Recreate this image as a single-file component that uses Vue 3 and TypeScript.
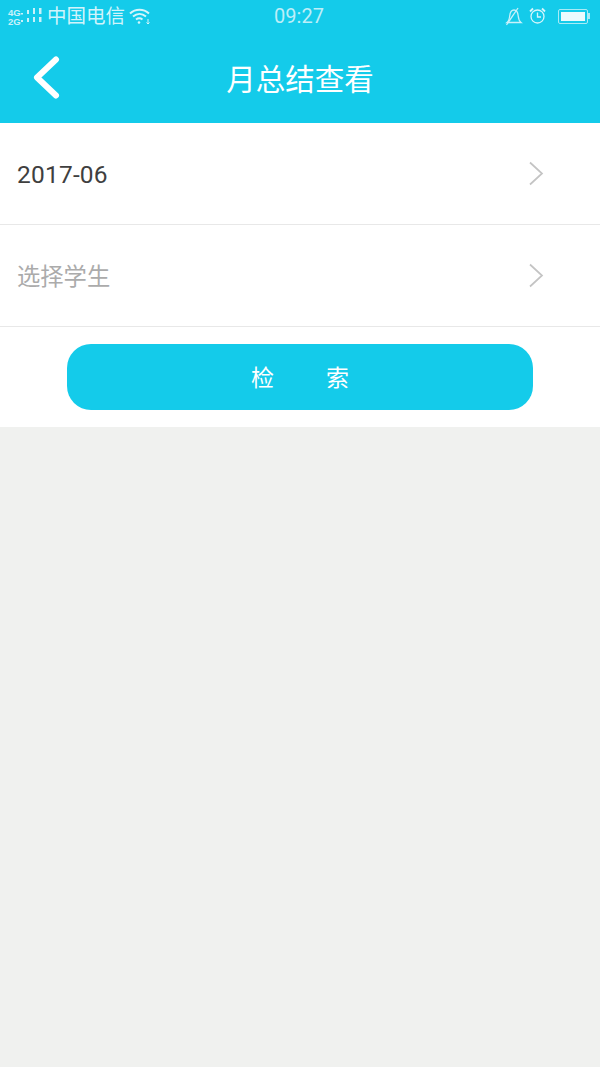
<script setup lang="ts">
const rows = [
  { label: '2017-06', placeholder: false },
  { label: '选择学生', placeholder: true },
]
</script>

<template>
  <div class="page">
    <header class="header">
      <div class="status">
        <div class="status-left">
          <div class="net"><span>4G</span><span>2G</span></div>
          <svg class="signal" width="22" height="18" viewBox="0 0 22 18">
            <g fill="#c9f1fa">
              <rect x="1" y="6" width="2" height="1.500" /><rect x="1" y="13" width="2" height="2" />
              <rect x="7" y="3" width="2" height="4" /><rect x="7" y="11" width="2" height="4" />
              <rect x="13" y="1" width="2" height="6" /><rect x="13" y="10" width="2" height="5" />
              <rect x="19" y="1" width="2.500" height="6" /><rect x="19" y="10" width="2.500" height="5" />
            </g>
          </svg>
          <span class="carrier">中国电信</span>
          <svg class="wifi" width="22" height="18" viewBox="0 0 22 18" fill="none" stroke="#d6f5fb" stroke-width="2">
            <path d="M1 6.500C6.500 1.500 14.500 1.500 20 6.500" />
            <path d="M4 9.500C8 6 13 6 17 9.500" />
            <path d="M7 12.500C9 11 11.500 11 13.500 12.500" />
            <circle cx="10" cy="15.500" r="1.300" fill="#d6f5fb" stroke="none" />
            <path d="M19 12v5M17.500 15.500l1.500 1.500 1.500-1.500" stroke-width="1" />
          </svg>
        </div>
        <span class="time">09:27</span>
        <div class="status-right">
          <svg width="18" height="19" viewBox="0 0 18 19" fill="none" stroke="#c9f1fa" stroke-width="1.300">
            <path d="M2 15.500h14c-2-1.500-2.500-3.500-2.800-6.500-.3-3.300-1.700-6-4.200-6S5 6 4.700 9C4.400 12 4 14 2 15.500Z" />
            <path d="M1.500 18 13 1" />
          </svg>
          <svg class="alarm" width="17" height="18" viewBox="0 0 17 18" fill="none" stroke="#d6f5fb" stroke-width="1.300">
            <circle cx="8.500" cy="9.500" r="6.500" />
            <path d="M8.500 5.500v4.500h3.500" />
            <path d="M1 4.500 4 1.500M16 4.500 13 1.500" stroke-width="1.800" />
          </svg>
          <div class="battery"><div class="battery-fill"></div></div>
          <div class="battery-cap"></div>
        </div>
      </div>
      <div class="nav">
        <svg class="back" width="30" height="44" viewBox="0 0 30 44" fill="none" stroke="#fff" stroke-width="6" stroke-linecap="round" stroke-linejoin="round">
          <path d="M25 3.500 6 21.500l19 18" />
        </svg>
        <h1 class="title">月总结查看</h1>
      </div>
    </header>

    <section class="panel">
      <div v-for="row in rows" :key="row.label" class="row">
        <span class="label" :class="{ placeholder: row.placeholder }">{{ row.label }}</span>
        <svg class="chevron" width="16" height="26" viewBox="0 0 16 26" fill="none" stroke="#c4c4c4" stroke-width="1.700">
          <path d="M2 1.500 14 12.500 2 23.500" />
        </svg>
      </div>
      <div class="action">
        <button class="search" type="button">检索</button>
      </div>
    </section>
  </div>
</template>

<style>
html, body { margin: 0; background: #f0f1ef; }
</style>

<style scoped>
.page {
  width: 600px;
  height: 1067px;
  background: #f0f1ef;
  font-family: "Noto Sans CJK SC", "Liberation Sans", sans-serif;
  overflow: hidden;
}
.header {
  height: 123px;
  background: #14cbea;
  display: flex;
  flex-direction: column;
}
.status {
  height: 32px;
  padding: 0 10px 0 8px;
  display: grid;
  grid-template-columns: 1fr auto 1fr;
  align-items: center;
}
.status-left { display: flex; align-items: center; }
.net {
  display: flex;
  flex-direction: column;
  width: 12px;
  padding-top: 1px;
  font: 700 9.500px/9px "Liberation Sans", sans-serif;
  color: #c9f1fa;
}
.signal { margin-right: 5px; }
.carrier { font-size: 19.500px; line-height: 30px; height: 32px; color: #d2f4fb; }
.wifi { margin-left: 4px; }
.time {
  font: 400 20px/32px "Roboto", "Liberation Sans", sans-serif;
  color: #bdeef8;
}
.status-right { display: flex; align-items: center; justify-content: flex-end; }
.alarm { margin-left: 6px; }
.battery {
  width: 30px;
  height: 15px;
  margin-left: 12px;
  padding: 2px;
  box-sizing: border-box;
  border: 1.500px solid #a8ebf6;
  border-radius: 2px;
}
.battery-fill { height: 100%; background: #eafbfe; }
.battery-cap { width: 2px; height: 6px; background: #a8ebf6; }
.nav {
  flex: 1;
  position: relative;
  display: flex;
  align-items: center;
  justify-content: center;
  padding-bottom: 2px;
}
.back { position: absolute; left: 31px; top: 23.500px; }
.title {
  margin: 0;
  font-size: 29.500px;
  font-weight: 400;
  line-height: 40px;
  color: #fff;
}
.panel { background: #fff; height: 304px; }
.row {
  height: 101px;
  border-bottom: 1px solid #e8e8e8;
  padding: 0 56px 0 17px;
  display: flex;
  align-items: center;
  justify-content: space-between;
}
.label {
  padding-top: 2px;
  font-size: 24.500px;
  letter-spacing: 0.200px;
  color: #3f3f3f;
  font-family: "Roboto", "Noto Sans CJK SC", sans-serif;
}
.label.placeholder {
  padding-top: 0;
  padding-bottom: 2px;
  font-size: 23.300px;
  letter-spacing: 0;
  color: #ababab;
}
.action { padding: 17px 67px; }
.search {
  display: block;
  width: 466px;
  height: 66px;
  border: none;
  border-radius: 24px;
  background: #14cbea;
  color: #fff;
  font-family: inherit;
  font-size: 23px;
  letter-spacing: 52px;
  padding: 0 0 3px 52px;
}
</style>
